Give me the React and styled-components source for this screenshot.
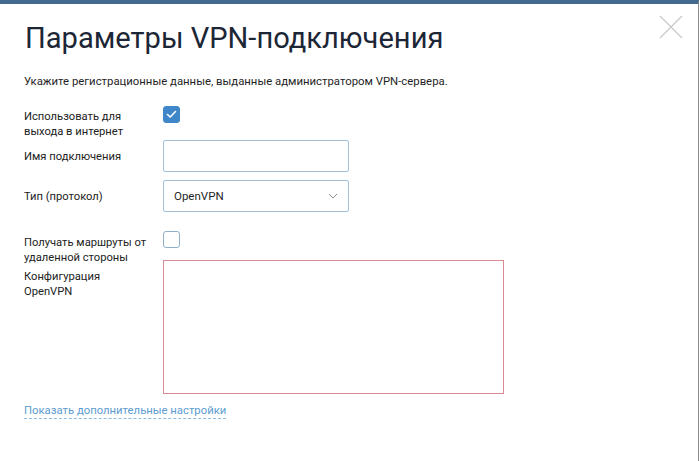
import React from "react";
import styled, { createGlobalStyle } from "styled-components";

const GlobalStyle = createGlobalStyle`
  html, body { margin: 0; padding: 0; background: #ffffff; }
  body { font-family: Roboto, "Noto Sans", "Liberation Sans", sans-serif; }
  * { box-sizing: border-box; }
`;

const Dialog = styled.div`
  position: relative;
  width: 699px;
  height: 461px;
  background: #ffffff;
  border-top: 4px solid #43698f;
  border-right: 1px solid #8c8c8c;
  padding: 16px 24px 0 24px;
  overflow: hidden;
`;

const Close = styled.button`
  position: absolute;
  top: 11px;
  right: 15px;
  width: 24px;
  height: 24px;
  padding: 0;
  border: 0;
  background: transparent;
  cursor: pointer;
`;

const Title = styled.h1`
  margin: 0 0 0 1px;
  font-size: 29.1px;
  line-height: 36px;
  font-weight: 400;
  color: #1c2636;
`;

const Subtitle = styled.p`
  margin: 17px 0 17px 0;
  font-size: 11.35px;
  line-height: 16px;
  color: #1f1f1f;
`;

const Form = styled.div`
  display: flex;
  flex-direction: column;
`;

const Row = styled.div`
  display: grid;
  grid-template-columns: 139px auto;
  align-items: ${(p) => (p.$center ? "center" : "start")};
  margin-top: ${(p) => p.$mt || 0}px;
`;

const Label = styled.div`
  font-size: 11.2px;
  line-height: 15px;
  color: #222222;
  padding-right: 14px;
  padding-top: ${(p) => p.$pt || 0}px;
`;

const Check = styled.span`
  display: inline-flex;
  align-items: center;
  justify-content: center;
  width: 17px;
  height: 17px;
  border-radius: 3px;
  background: ${(p) => (p.$checked ? "#3f87c9" : "#ffffff")};
  border: 1px solid ${(p) => (p.$checked ? "#3f87c9" : "#8fb0c8")};
`;

const Input = styled.div`
  width: 186px;
  height: 32px;
  border: 1px solid #a7c0d3;
  border-radius: 2px;
  background: #fff;
`;

const Select = styled.div`
  width: 186px;
  height: 32px;
  border: 1px solid #a7c0d3;
  border-radius: 2px;
  background: #fff;
  display: flex;
  align-items: center;
  justify-content: space-between;
  padding: 0 10px 0 10px;
  font-size: 11.5px;
  color: #1f1f1f;
`;

const TextArea = styled.div`
  width: 341px;
  height: 134px;
  border: 1px solid #d98a92;
  background: #fff;
`;

const Link = styled.a`
  display: inline-block;
  margin-top: 9px;
  font-size: 11.3px;
  line-height: 15px;
  color: #5c9ccf;
  text-decoration: none;
  border-bottom: 1px dashed #8dbbe0;
  align-self: flex-start;
  cursor: pointer;
`;

export default function App() {
  return (
    <>
      <GlobalStyle />
      <Dialog>
        <Close aria-label="Закрыть">
          <svg width="24" height="24" viewBox="0 0 24 24">
            <path d="M1 1 L23 23 M23 1 L1 23" stroke="#c9c9c9" strokeWidth="1.3" fill="none" />
          </svg>
        </Close>
        <Title>Параметры VPN-подключения</Title>
        <Subtitle>Укажите регистрационные данные, выданные администратором VPN-сервера.</Subtitle>
        <Form>
          <Row>
            <Label $pt={3}>Использовать для выхода в интернет</Label>
            <Check $checked>
              <svg width="11" height="9" viewBox="0 0 11 9">
                <path d="M1.5 4.5 L4.2 7 L9.5 1.5" stroke="#ffffff" strokeWidth="1.6" fill="none" strokeLinecap="round" strokeLinejoin="round" />
              </svg>
            </Check>
          </Row>
          <Row $center $mt={1}>
            <Label>Имя подключения</Label>
            <Input />
          </Row>
          <Row $center $mt={8}>
            <Label>Тип (протокол)</Label>
            <Select>
              <span>OpenVPN</span>
              <svg width="10" height="6" viewBox="0 0 10 6">
                <path d="M1 1 L5 5 L9 1" stroke="#8a8a8a" strokeWidth="1" fill="none" />
              </svg>
            </Select>
          </Row>
          <Row $mt={19}>
            <Label $pt={4}>Получать маршруты от удаленной стороны</Label>
            <Check />
          </Row>
          <Row $mt={-5}>
            <Label $pt={9}>Конфигурация OpenVPN</Label>
            <TextArea />
          </Row>
          <Link>Показать дополнительные настройки</Link>
        </Form>
      </Dialog>
    </>
  );
}
